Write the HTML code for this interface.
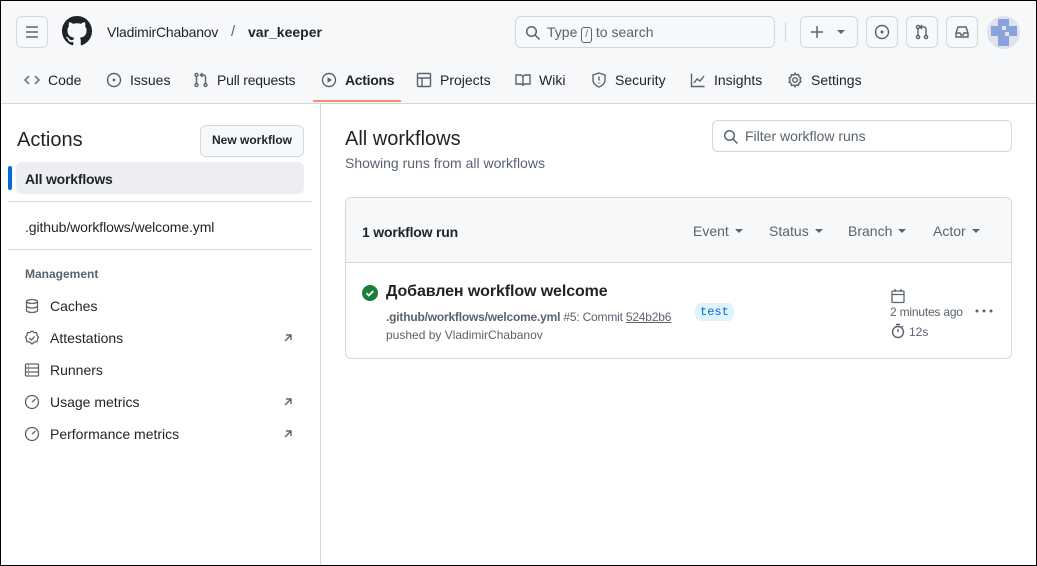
<!DOCTYPE html><html><head><meta charset="utf-8"><style>
*{box-sizing:border-box;margin:0;padding:0}
body{width:1037px;height:566px;overflow:hidden;font-family:"Liberation Sans","DejaVu Sans",sans-serif;color:#1f2328;background:#fff;position:relative;font-size:14px}
.frame{position:absolute;inset:0;border:1px solid #000;pointer-events:none;z-index:9}
.hdr{position:absolute;left:0;top:0;width:1037px;height:104px;background:#f6f8fa;border-bottom:1px solid #d1d9e0}
.a{position:absolute}
.btn{position:absolute;border:1px solid #d1d9e0;border-radius:6px;background:#f6f8fa;height:32px}
svg{display:block}
.tab{position:absolute;top:72px;font-size:14px;color:#1f2328;display:flex;align-items:center;gap:8px}
.side{position:absolute;left:0;top:104px;width:321px;height:462px;border-right:1px solid #d1d9e0}
.nav{position:absolute;left:24px;font-size:14px;display:flex;align-items:center;gap:10px}
.car{display:inline-block;width:0;height:0;border:4px solid transparent;border-top:4px solid #59636e;margin-left:6px;vertical-align:middle;position:relative;top:1px}
</style></head><body>
<div class="hdr">
 <div class="btn" style="left:16px;top:16px;width:32px"><svg width="30" height="30" viewBox="0 0 30 30"><path d="M9 10h12M9 15h12M9 20h12" stroke="#59636e" stroke-width="1.6"/></svg></div>
 <svg class="a" style="left:62px;top:16px" width="30" height="30" viewBox="0 0 16 16"><path fill="#1f2328" d="M8 0C3.58 0 0 3.58 0 8c0 3.540 2.29 6.53 5.47 7.59.4.07.55-.17.55-.38v-1.330c-2.23.48-2.7-1.07-2.7-1.07-.36-.92-.89-1.170-.89-1.170-.73-.5.05-.49.05-.49.81.06 1.23.83 1.23.83.72 1.23 1.88.87 2.34.67.07-.52.28-.87.51-1.07-1.78-.2-3.65-.89-3.65-3.96 0-.87.31-1.59.82-2.15-.08-.2-.36-1.02.08-2.12 0 0 .67-.21 2.2.82a7.6 7.6 0 014 0c1.53-1.04 2.2-.82 2.2-.82.44 1.1.16 1.92.08 2.12.51.56.82 1.27.82 2.15 0 3.07-1.870 3.75-3.65 3.95.29.25.54.73.54 1.48v2.2c0 .21.15.46.55.38A8.01 8.01 0 0016 8c0-4.42-3.58-8-8-8z"/></svg>
 <div class="a" style="left:107px;top:24px;font-size:14px;letter-spacing:-0.2px">VladimirChabanov</div>
 <div class="a" style="left:231px;top:23px;font-size:15px;color:#59636e">/</div>
 <div class="a" style="left:248px;top:24px;font-size:14px;font-weight:bold">var_keeper</div>
 <div class="btn" style="left:515px;top:16px;width:260px;background:#f6f8fa"><svg class="a" style="left:9px;top:8px" width="16" height="16" viewBox="0 0 16 16"><circle cx="6.5" cy="6.5" r="4.8" fill="none" stroke="#59636e" stroke-width="1.5"/><path d="M10 10l4.5 4.5" stroke="#59636e" stroke-width="1.5"/></svg><span class="a" style="left:31px;top:7px;color:#59636e;font-size:14px">Type <span style="display:inline-block;border:1px solid #59636e;border-radius:3px;font-size:10px;padding:0 3px;line-height:14px">/</span> to search</span></div>
 <div class="a" style="left:785px;top:22px;width:1px;height:20px;background:#d1d9e0"></div>
 <div class="btn" style="left:800px;top:16px;width:58px"><svg class="a" style="left:9px;top:8px" width="14" height="14" viewBox="0 0 14 14"><path d="M7 1v12M1 7h12" stroke="#59636e" stroke-width="1.5"/></svg><span class="a" style="left:36px;top:13px;border:4px solid transparent;border-top-color:#59636e"></span></div>
 <div class="btn" style="left:866px;top:16px;width:32px"><svg width="30" height="30" viewBox="0 0 30 30"><circle cx="15" cy="15" r="6.5" fill="none" stroke="#59636e" stroke-width="1.4"/><circle cx="15" cy="15" r="1.5" fill="#59636e"/></svg></div>
 <div class="btn" style="left:906px;top:16px;width:32px"><svg width="30" height="30" viewBox="0 0 30 30" fill="none" stroke="#59636e" stroke-width="1.4"><circle cx="11" cy="10" r="1.6"/><circle cx="11" cy="20" r="1.6"/><circle cx="19" cy="20" r="1.6"/><path d="M11 12v6M19 18v-6a2 2 0 00-2-2h-3M15 8l-2 2 2 2"/></svg></div>
 <div class="btn" style="left:946px;top:16px;width:32px"><svg width="30" height="30" viewBox="0 0 30 30" fill="none" stroke="#59636e" stroke-width="1.4"><path d="M9 16l2-6h8l2 6v4H9z M9 16h4l1 2h2l1-2h4"/></svg></div>
 <div class="a" style="left:987px;top:16px;width:33px;height:33px;border-radius:50%;background:#dde3ea;overflow:hidden"><svg width="33" height="33" viewBox="0 0 33 33"><path fill="#8aa2dc" d="M11 3h11v7h8v10h-8v-4h-4v4h4v10H11v-10H4V10h7zM15 10v4h4v-4z"/></svg></div>

 <div class="tab" style="left:24px"><svg width="16" height="16" viewBox="0 0 16 16" fill="none" stroke="#59636e" stroke-width="1.4"><path d="M5 4L1 8l4 4M11 4l4 4-4 4"/></svg><span>Code</span></div>
 <div class="tab" style="left:106px"><svg width="16" height="16" viewBox="0 0 16 16"><circle cx="8" cy="8" r="6.5" fill="none" stroke="#59636e" stroke-width="1.4"/><circle cx="8" cy="8" r="1.4" fill="#59636e"/></svg><span>Issues</span></div>
 <div class="tab" style="left:193px"><svg width="16" height="16" viewBox="0 0 16 16" fill="none" stroke="#59636e" stroke-width="1.4"><circle cx="3.5" cy="3" r="1.5"/><circle cx="3.5" cy="13" r="1.5"/><circle cx="12.5" cy="13" r="1.5"/><path d="M3.5 5v6M12.5 11V5a2 2 0 00-2-2H8M9.5 1L7.5 3l2 2"/></svg><span style="letter-spacing:-0.2px">Pull requests</span></div>
 <div class="tab" style="left:321px;font-weight:bold"><svg width="16" height="16" viewBox="0 0 16 16"><circle cx="8" cy="8" r="6.5" fill="none" stroke="#59636e" stroke-width="1.4"/><path d="M6.5 5.2v5.6L11 8z" fill="#59636e"/></svg><span style="letter-spacing:-0.3px">Actions</span></div>
 <div class="a" style="left:313px;top:100px;width:88px;height:2px;background:#fd8c73"></div>
 <div class="tab" style="left:416px"><svg width="16" height="16" viewBox="0 0 16 16" fill="none" stroke="#59636e" stroke-width="1.4"><rect x="1.5" y="1.5" width="13" height="13" rx="1"/><path d="M1.5 6h13M6 6v8.5"/></svg><span>Projects</span></div>
 <div class="tab" style="left:515px"><svg width="16" height="16" viewBox="0 0 16 16" fill="none" stroke="#59636e" stroke-width="1.4"><path d="M1 3h4.5A2.5 2.5 0 018 5.5V14a2 2 0 00-2-2H1zM15 3h-4.5A2.5 2.5 0 008 5.5V14a2 2 0 012-2h5z"/></svg><span>Wiki</span></div>
 <div class="tab" style="left:591px"><svg width="16" height="16" viewBox="0 0 16 16" fill="none" stroke="#59636e" stroke-width="1.4"><path d="M8 1l6 2v5c0 3.5-3 6-6 7-3-1-6-3.5-6-7V3z"/><path d="M8 4.5v4M8 10.5v1"/></svg><span>Security</span></div>
 <div class="tab" style="left:690px"><svg width="16" height="16" viewBox="0 0 16 16" fill="none" stroke="#59636e" stroke-width="1.4"><path d="M1.5 1.5v13h13M4 11l3-4 3 2 4-5"/></svg><span>Insights</span></div>
 <div class="tab" style="left:787px"><svg width="16" height="16" viewBox="0 0 16 16" fill="none" stroke="#59636e" stroke-width="1.4"><circle cx="8" cy="8" r="2.3"/><path d="M8 1.2l1.3 1.8 2.2-.5.5 2.2 1.9 1.2-1 2 1 2-1.9 1.2-.5 2.2-2.2-.5L8 14.8l-1.3-1.8-2.2.5-.5-2.2-1.9-1.2 1-2-1-2 1.9-1.2.5-2.2 2.2.5z"/></svg><span>Settings</span></div>
</div>

<div class="side">
 <div class="a" style="left:17px;top:25px;font-size:20px">Actions</div>
 <div class="btn" style="left:200px;top:21px;width:104px;font-size:12px;font-weight:bold;text-align:center;line-height:28px">New workflow</div>
 <div class="a" style="left:16px;top:58px;width:288px;height:32px;background:#eceef1;border-radius:6px"></div>
 <div class="a" style="left:8px;top:62px;width:4px;height:24px;background:#0969da;border-radius:2px"></div>
 <div class="a" style="left:25px;top:67px;font-weight:bold;letter-spacing:-0.2px">All workflows</div>
 <div class="a" style="left:8px;top:97px;width:304px;height:1px;background:#d1d9e0"></div>
 <div class="a" style="left:25px;top:115px;letter-spacing:-0.1px">.github/workflows/welcome.yml</div>
 <div class="a" style="left:8px;top:145px;width:304px;height:1px;background:#d1d9e0"></div>
 <div class="a" style="left:25px;top:163px;font-size:12px;color:#59636e;font-weight:bold">Management</div>
 <div class="nav" style="top:194px"><svg width="16" height="16" viewBox="0 0 16 16" fill="none" stroke="#59636e" stroke-width="1.3"><ellipse cx="8" cy="3.5" rx="5.5" ry="2"/><path d="M2.5 3.5v9c0 1.1 2.5 2 5.5 2s5.5-.9 5.5-2v-9M2.5 8c0 1.1 2.5 2 5.5 2s5.5-.9 5.5-2"/></svg>Caches</div>
 <div class="nav" style="top:226px"><svg width="16" height="16" viewBox="0 0 16 16" fill="none" stroke="#59636e" stroke-width="1.3"><path d="M8 1l2 1.5 2.5.2.5 2.4L14.5 7 13.5 9.3 13 11.7l-2.5.3L8 14l-2.5-2-2.5-.3-.5-2.4L1.5 7l1.5-1.9.5-2.4 2.5-.2z"/><path d="M5.5 8l2 2 3-3.5"/></svg>Attestations</div>
 <div class="nav" style="top:258px"><svg width="16" height="16" viewBox="0 0 16 16" fill="none" stroke="#59636e" stroke-width="1.3"><rect x="1.5" y="2" width="13" height="12" rx="1"/><path d="M1.5 6h13M1.5 10h13M4 4h1M4 8h1M4 12h1"/></svg>Runners</div>
 <div class="nav" style="top:290px"><svg width="16" height="16" viewBox="0 0 16 16" fill="none" stroke="#59636e" stroke-width="1.3"><circle cx="8" cy="8" r="6.5"/><path d="M8 8l3.5-3"/></svg>Usage metrics</div>
 <div class="nav" style="top:322px"><svg width="16" height="16" viewBox="0 0 16 16" fill="none" stroke="#59636e" stroke-width="1.3"><circle cx="8" cy="8" r="6.5"/><path d="M8 8l3.5-3"/></svg>Performance metrics</div>
 <svg class="a" style="left:282px;top:228px" width="12" height="12" viewBox="0 0 12 12"><path d="M3 9l6-6M4 3h5v5" fill="none" stroke="#59636e" stroke-width="1.4"/></svg>
 <svg class="a" style="left:282px;top:292px" width="12" height="12" viewBox="0 0 12 12"><path d="M3 9l6-6M4 3h5v5" fill="none" stroke="#59636e" stroke-width="1.4"/></svg>
 <svg class="a" style="left:282px;top:324px" width="12" height="12" viewBox="0 0 12 12"><path d="M3 9l6-6M4 3h5v5" fill="none" stroke="#59636e" stroke-width="1.4"/></svg>
</div>

<div class="a" style="left:345px;top:128px;font-size:20px">All workflows</div>
<div class="a" style="left:345px;top:155px;font-size:14px;color:#59636e">Showing runs from all workflows</div>
<div class="a" style="left:712px;top:120px;width:300px;height:32px;border:1px solid #d1d9e0;border-radius:6px"><svg class="a" style="left:10px;top:8px" width="16" height="16" viewBox="0 0 16 16"><circle cx="6.5" cy="6.5" r="4.8" fill="none" stroke="#59636e" stroke-width="1.5"/><path d="M10 10l4.5 4.5" stroke="#59636e" stroke-width="1.5"/></svg><span class="a" style="left:32px;top:7px;color:#59636e">Filter workflow runs</span></div>

<div class="a" style="left:345px;top:197px;width:667px;height:162px;border:1px solid #d1d9e0;border-radius:6px;overflow:hidden">
 <div class="a" style="left:0;top:0;width:667px;height:65px;background:#f6f8fa;border-bottom:1px solid #d1d9e0"></div>
 <div class="a" style="left:16px;top:26px;font-weight:bold;letter-spacing:-0.2px">1 workflow run</div>
 <div class="a" style="left:347px;top:25px;color:#59636e">Event<span class="car"></span></div>
 <div class="a" style="left:423px;top:25px;color:#59636e">Status<span class="car"></span></div>
 <div class="a" style="left:502px;top:25px;color:#59636e">Branch<span class="car"></span></div>
 <div class="a" style="left:587px;top:25px;color:#59636e">Actor<span class="car"></span></div>
 <svg class="a" style="left:16px;top:87px" width="16" height="16" viewBox="0 0 16 16"><circle cx="8" cy="8" r="8" fill="#1a7f37"/><path d="M4.5 8.2l2.3 2.3 4.5-4.5" fill="none" stroke="#fff" stroke-width="1.8"/></svg>
 <div class="a" style="left:40px;top:85px;font-size:16px;font-weight:bold;letter-spacing:-0.1px">Добавлен workflow welcome</div>
 <div class="a" style="left:40px;top:112px;font-size:12px;color:#59636e;letter-spacing:-0.2px"><b>.github/workflows/welcome.yml</b> #5: Commit <span style="text-decoration:underline">524b2b6</span></div>
 <div class="a" style="left:40px;top:130px;font-size:12px;color:#59636e">pushed by VladimirChabanov</div>
 <div class="a" style="left:349px;top:105px;background:#ddf4ff;color:#0969da;border-radius:6px;padding:2px 5px;font-family:'Liberation Mono',monospace;font-size:12px">test</div>
 <svg class="a" style="left:544px;top:90px" width="16" height="16" viewBox="0 0 16 16" fill="none" stroke="#59636e" stroke-width="1.3"><rect x="2" y="3" width="12" height="11.5" rx="1"/><path d="M2 6.5h12M5 1v3M11 1v3"/></svg>
 <div class="a" style="left:544px;top:107px;font-size:12px;color:#59636e;letter-spacing:-0.2px">2 minutes ago</div>
 <svg class="a" style="left:544px;top:125px" width="16" height="16" viewBox="0 0 16 16" fill="none" stroke="#59636e" stroke-width="1.4"><circle cx="8" cy="9" r="5.5"/><path d="M6 1.5h4M8 9V6M12 4l1-1"/></svg>
 <div class="a" style="left:563px;top:127px;font-size:12px;color:#59636e">12s</div>
 <svg class="a" style="left:629px;top:111px" width="18" height="4" viewBox="0 0 18 4"><circle cx="2" cy="2" r="1.5" fill="#59636e"/><circle cx="9" cy="2" r="1.5" fill="#59636e"/><circle cx="16" cy="2" r="1.5" fill="#59636e"/></svg>
</div>
<div class="frame"></div>
</body></html>
